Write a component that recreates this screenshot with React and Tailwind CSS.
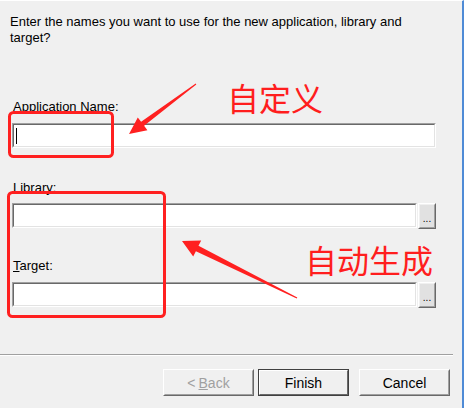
import React from "react";

const font = { fontFamily: '"Liberation Sans", Arial, sans-serif' };
const cjk = { fontFamily: '"Noto Sans CJK SC", "Noto Sans", sans-serif' };

// sunken edit box, classic windows look
const EditBox = ({ caret, className = "" }) => (
  <div className={`h-[25px] border border-t-[#a0a0a0] border-l-[#a0a0a0] border-b-white border-r-white ${className}`}>
    <div className="h-full border border-t-[#696969] border-l-[#696969] border-b-[#e3e3e3] border-r-[#e3e3e3] bg-white flex items-center pl-[2px]">
      {caret && <div className="w-px h-[16px] bg-black" />}
    </div>
  </div>
);

const BrowseButton = () => (
  <div className="w-[18px] h-[26px] border border-t-white border-l-white border-b-[#696969] border-r-[#696969]">
    <div className="h-full bg-[#e1e1e1] border border-t-[#f0f0f0] border-l-[#f0f0f0] border-b-[#a0a0a0] border-r-[#a0a0a0] flex items-end justify-center pb-[3px] text-[10px] leading-none text-black">
      ...
    </div>
  </div>
);

const PushButton = ({ children, isDefault, disabled }) => (
  <div className={`w-[91px] h-[27px] border ${isDefault ? "border-[#404040]" : "border-t-white border-l-white border-b-[#696969] border-r-[#696969]"}`}>
    <div className={`h-full border flex items-center justify-center text-[14px] ${isDefault ? "border-t-white border-l-white border-b-[#696969] border-r-[#696969]" : "border-t-[#f0f0f0] border-l-[#f0f0f0] border-b-[#a0a0a0] border-r-[#a0a0a0]"} ${disabled ? "text-[#a0a0a0]" : "text-black"} bg-[#f0f0f0]`}>
      {children}
    </div>
  </div>
);

export default function App() {
  return (
    <div className="relative w-[464px] h-[408px] overflow-hidden bg-[#f0f0f0] border-t border-white border-r-2 border-r-[#4f8bd6] text-[13px] leading-[16px] text-black" style={font}>
      <div className="px-[10px] pt-[13px]">
        <p className="whitespace-nowrap text-[13px] leading-[16px]">
          Enter the names you want to use for the new application, library and
          <br />
          target?
        </p>
      </div>

      <div className="pl-[12px] pr-[26px]">
        <div className="mt-[53px] pl-px">Application Name:</div>
        <EditBox caret className="mt-[8px] w-[424px]" />

        <div className="mt-[32px] pl-px">
          <span className="underline">L</span>ibrary:
        </div>
        <div className="mt-[7px] flex gap-px">
          <EditBox className="w-[406px]" />
          <BrowseButton />
        </div>

        <div className="mt-[29px] pl-px">
          <span className="underline">T</span>arget:
        </div>
        <div className="mt-[8px] flex gap-px">
          <EditBox className="w-[405px]" />
          <BrowseButton />
        </div>
      </div>

      <div className="mt-[46px] w-[453px] border-t border-t-[#a0a0a0] border-b border-b-white" />

      <div className="mt-[13px] flex pl-[163px]">
        <PushButton disabled>
          &lt; <span className="underline ml-[3px]">B</span>ack
        </PushButton>
        <div className="ml-[4px]">
          <PushButton isDefault>Finish</PushButton>
        </div>
        <div className="ml-[10px]">
          <PushButton>Cancel</PushButton>
        </div>
      </div>

      {/* red annotations drawn on top of the screenshot */}
      <svg className="absolute inset-0 pointer-events-none" width="464" height="408" viewBox="0 0 464 408">
        <rect x="9.5" y="111.5" width="103" height="44" rx="4" fill="none" stroke="#ff2020" strokeWidth="3" />
        <rect x="8.5" y="191.5" width="156" height="124" rx="4" fill="none" stroke="#ff2020" strokeWidth="3" />
        <polygon
          fill="#ff2020"
          points="196.3,83.4 144.1,124.8 147.4,129.2 129,133 137.8,116.4 141.1,120.8 195.7,82.6"
        />
        <polygon
          fill="#ff2020"
          points="297.3,296.4 198.5,244.8 201.2,239.4 182,240 193.2,255.6 195.9,250.2 296.7,297.6"
        />
      </svg>
      <div className="absolute left-[227px] top-[80px] text-[32px] leading-[32px] text-[#ff1e1e]" style={cjk}>
        自定义
      </div>
      <div className="absolute left-[305px] top-[242px] text-[32px] leading-[32px] text-[#ff1e1e]" style={cjk}>
        自动生成
      </div>
    </div>
  );
}
